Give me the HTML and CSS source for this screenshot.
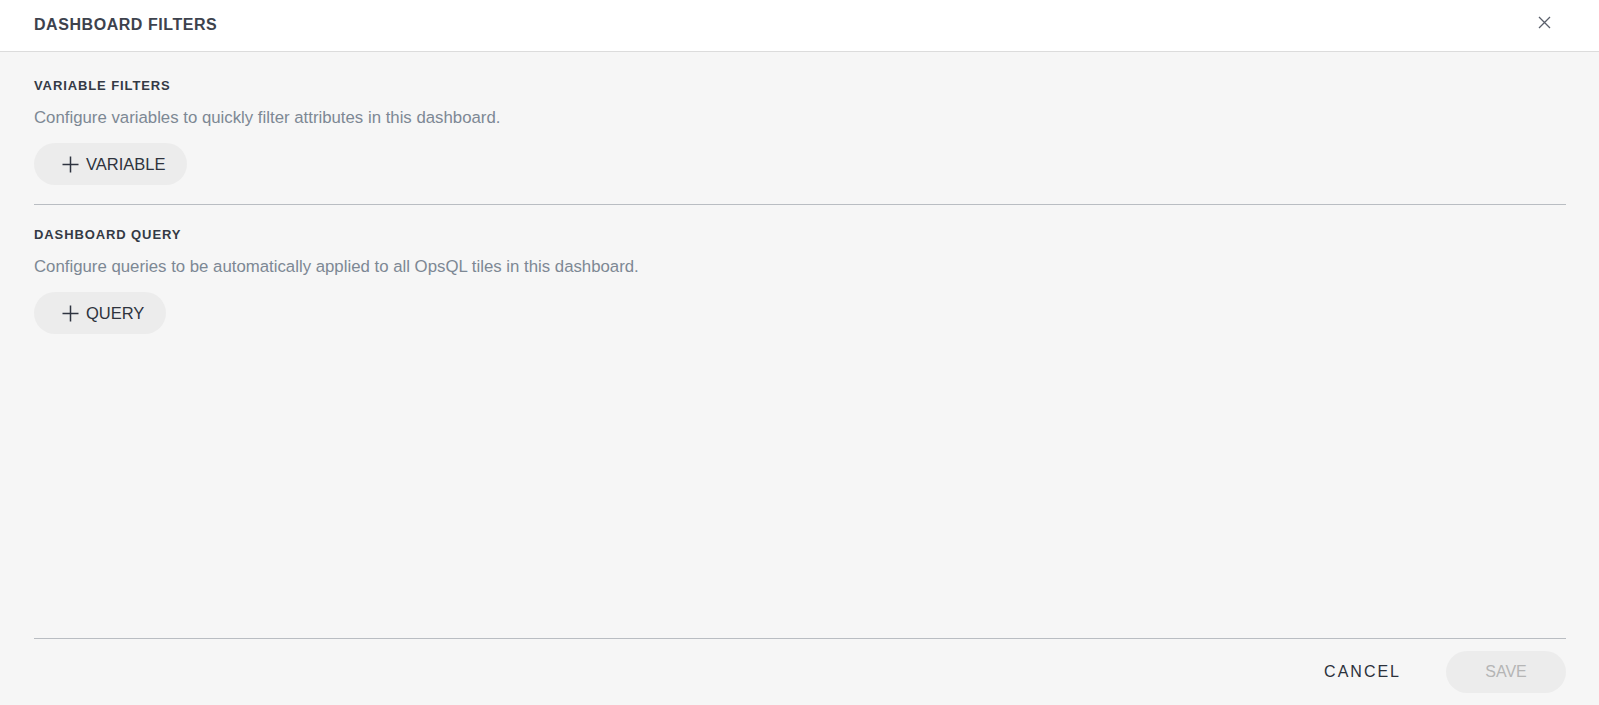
FILE: index.html
```html
<!DOCTYPE html>
<html>
<head>
    <title>Dashboard Filters</title>
    <link rel="stylesheet" href="styles.css">
</head>
<body>
    <div class="dialog">
        <div class="dialog-header">
            <h1>DASHBOARD FILTERS</h1>
            <button class="close-btn" type="button" aria-label="Close">
                <svg width="13" height="13" viewBox="0 0 13 13"><path d="M1 1 L12 12 M12 1 L1 12" stroke="#5a5f6b" stroke-width="1.3" fill="none"/></svg>
            </button>
        </div>
        <div class="dialog-body">
            <div class="section first">
                <h2>VARIABLE FILTERS</h2>
                <p class="desc">Configure variables to quickly filter attributes in this dashboard.</p>
                <button class="add-btn" type="button">
                    <svg width="17" height="17" viewBox="0 0 17 17"><path d="M8.5 0.5 V16.5 M0.5 8.5 H16.5" stroke="#2f3440" stroke-width="1.5" fill="none"/></svg>
                    VARIABLE
                </button>
            </div>
            <hr class="divider">
            <div class="section">
                <h2>DASHBOARD QUERY</h2>
                <p class="desc">Configure queries to be automatically applied to all OpsQL tiles in this dashboard.</p>
                <button class="add-btn" type="button">
                    <svg width="17" height="17" viewBox="0 0 17 17"><path d="M8.5 0.5 V16.5 M0.5 8.5 H16.5" stroke="#2f3440" stroke-width="1.5" fill="none"/></svg>
                    QUERY
                </button>
            </div>
            <div class="dialog-footer">
                <button class="cancel-btn" type="button">CANCEL</button>
                <button class="save-btn" type="button" disabled>SAVE</button>
            </div>
        </div>
    </div>
</body>
</html>
```
FILE: styles.css
```css
body {
    font-family: "Liberation Sans", Arial, sans-serif;
    background-color: #f6f6f6;
    margin: 0;
    padding: 0;
}

.dialog {
    height: 100vh;
    display: flex;
    flex-direction: column;
}

.dialog-header {
    height: 49px;
    background-color: #fff;
    border-bottom: 1px solid #dcdcdc;
    display: flex;
    align-items: center;
    justify-content: space-between;
    padding: 0 48px 2px 34px;
}

.dialog-header h1 {
    margin: 0;
    font-size: 16px;
    font-weight: bold;
    letter-spacing: 0.55px;
    color: #3d424d;
}

.close-btn {
    align-self: flex-start;
    margin-top: 16px;
    background: none;
    border: none;
    padding: 0;
    width: 13px;
    height: 13px;
    cursor: pointer;
    display: flex;
}

.dialog-body {
    flex: 1;
    display: flex;
    flex-direction: column;
    padding: 0 33px 0 34px;
}

.section {
    padding-top: 22px;
}

.section.first {
    padding-top: 26px;
}

.section h2 {
    margin: 0;
    font-size: 13px;
    line-height: 16px;
    font-weight: bold;
    letter-spacing: 0.9px;
    color: #343a45;
}

.desc {
    margin: 14px 0 15px;
    font-size: 16.8px;
    line-height: 20px;
    color: #7d8894;
}

.add-btn {
    height: 42px;
    display: inline-flex;
    align-items: center;
    gap: 7px;
    padding: 0 22px 0 28px;
    border: none;
    border-radius: 21px;
    background-color: #ececec;
    font-family: inherit;
    font-size: 16.5px;
    color: #2e333d;
    cursor: pointer;
}

.divider {
    border: none;
    border-top: 1px solid #b9bdc2;
    margin: 19px 0 0;
}

.dialog-footer {
    margin-top: auto;
    border-top: 1px solid #b9bdc2;
    padding: 12px 0 12px;
    display: flex;
    justify-content: flex-end;
    gap: 21px;
}

.cancel-btn {
    height: 42px;
    padding: 0 24px;
    border: none;
    background: none;
    font-family: inherit;
    font-size: 16px;
    letter-spacing: 2px;
    color: #2c313b;
    cursor: pointer;
}

.save-btn {
    height: 42px;
    min-width: 120px;
    border: none;
    border-radius: 21px;
    background-color: #ececec;
    font-family: inherit;
    font-size: 16px;
    color: #b5b5b5;
}
```
